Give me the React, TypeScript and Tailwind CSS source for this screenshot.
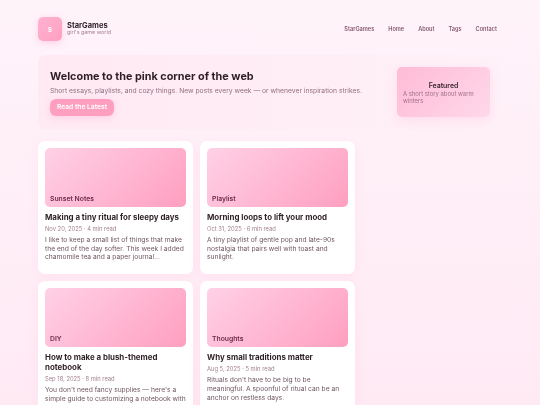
const font = { fontFamily: "Inter, 'Liberation Sans', sans-serif" };

type Post = { tag: string; title: string; meta: string; body: string };

const posts: Post[] = [
  {
    tag: "Sunset Notes",
    title: "Making a tiny ritual for sleepy days",
    meta: "Nov 20, 2025 · 4 min read",
    body: "I like to keep a small list of things that make the end of the day softer. This week I added chamomile tea and a paper journal...",
  },
  {
    tag: "Playlist",
    title: "Morning loops to lift your mood",
    meta: "Oct 31, 2025 · 6 min read",
    body: "A tiny playlist of gentle pop and late-90s nostalgia that pairs well with toast and sunlight.",
  },
  {
    tag: "DIY",
    title: "How to make a blush-themed notebook",
    meta: "Sep 18, 2025 · 8 min read",
    body: "You don't need fancy supplies — here's a simple guide to customizing a notebook with paper scraps and watercolor.",
  },
  {
    tag: "Thoughts",
    title: "Why small traditions matter",
    meta: "Aug 5, 2025 · 5 min read",
    body: "Rituals don't have to be big to be meaningful. A spoonful of ritual can be an anchor on restless days.",
  },
];

function Card({ post }: { post: Post }) {
  return (
    <article className="rounded-[7px] bg-white p-[7px] pb-[12px] shadow-[0_3px_12px_rgba(255,150,190,0.1)]">
      <div className="flex h-[59px] items-end rounded-[5px] bg-[linear-gradient(135deg,#ffd1e6,#ff9fc0)] px-[5px] pb-[4px] text-[6.8px] leading-[9px] font-semibold text-[#6b2a49]">
        {post.tag}
      </div>
      <h3 className="mt-[5px] text-[7.9px] leading-[10px] font-bold text-[#2e1f27]">{post.title}</h3>
      <p className="mt-[3px] text-[5.8px] leading-[8px] text-[#a37f90]">{post.meta}</p>
      <p className="mt-[3px] text-[6.7px] leading-[8.7px] text-[#6f5563]">{post.body}</p>
    </article>
  );
}

export default function App() {
  return (
    <div style={font} className="h-[405px] overflow-hidden bg-[linear-gradient(180deg,#fff3fa,#ffeaf4)]">
      <div className="pt-[17px] pr-[38px] pl-[38px] blur-[0.35px]">
        <header className="flex h-[24px] items-center justify-between pr-[5px]">
          <div className="flex items-center gap-[5px]">
            <div className="flex size-[24px] items-center justify-center rounded-[5px] bg-[linear-gradient(135deg,#ffb3d1,#ff9fc0)] text-[6px] font-bold text-white shadow-[0_2px_7px_rgba(255,150,190,0.35)]">
              S
            </div>
            <div className="pb-[1px]">
              <div className="text-[7.5px] leading-[7.5px] font-bold text-[#2e1f27]">StarGames</div>
              <div className="text-[5.4px] leading-[5.4px] text-[#a37f90]">girl's game world</div>
            </div>
          </div>
          <nav className="flex gap-[14px] text-[5.6px] font-semibold text-[#84596f]">
            <span>StarGames</span>
            <span>Home</span>
            <span>About</span>
            <span>Tags</span>
            <span>Contact</span>
          </nav>
        </header>

        <section className="mt-[14px] flex h-[74px] items-center justify-between rounded-[7px] bg-[linear-gradient(90deg,#ffe9f3,#fff1f8)] px-[12px]">
          <div>
            <h1 className="text-[10.85px] leading-[14px] font-bold text-[#2e1f27]">Welcome to the pink corner of the web</h1>
            <p className="mt-[3px] text-[6.75px] leading-[9px] text-[#92707f]">
              Short essays, playlists, and cozy things. New posts every week — or whenever inspiration strikes.
            </p>
            <div className="mt-[4px] flex h-[17px] w-[64px] items-center justify-center rounded-[6px] bg-[#ff9fc0] text-[6.7px] font-semibold text-white shadow-[0_2px_6px_rgba(255,150,190,0.3)]">
              Read the Latest
            </div>
          </div>
          <aside className="h-[50px] w-[93px] flex-none rounded-[5px] bg-[linear-gradient(135deg,#ffbbd6,#ffd8ea)] px-[6px] pt-[14.5px] shadow-[0_4px_12px_rgba(255,150,190,0.2)]">
            <h2 className="text-center text-[6.9px] leading-[8px] font-semibold text-[#2e1f27]">Featured</h2>
            <p className="text-[5.9px] leading-[7px] text-[#a0708a]">A short story about warm winters</p>
          </aside>
        </section>

        <main className="mt-[12px] grid w-[317px] grid-cols-2 gap-[7px]">
          {posts.map((post) => (
            <Card key={post.tag} post={post} />
          ))}
        </main>
      </div>
    </div>
  );
}
